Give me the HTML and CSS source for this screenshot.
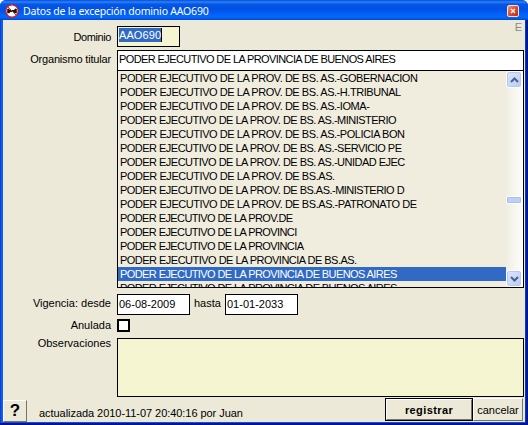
FILE: index.html
```html
<!DOCTYPE html>
<html lang="es">
<head>
<meta charset="utf-8">
<title>Datos de la excepción dominio AAO690</title>
<link rel="stylesheet" href="styles.css">
</head>
<body>
<main class="window">
  <header class="titlebar">
    <svg class="app-icon" viewBox="0 0 14 14"><circle cx="7" cy="7" r="6.2" fill="#fff" stroke="#d8121b" stroke-width="1.3"/><path d="M2.2 5l1.5-.5L5 6h4l1.3-1.5 1.5.5v4.2h-2L8.5 8h-3L4.2 9.2h-2z" fill="#171717"/><path d="M3 3l8 8" stroke="#e62832" stroke-width="1"/></svg>
    <h1 class="title">Datos de la excepción dominio AAO690</h1>
    <button class="close" aria-label="Cerrar"><svg viewBox="0 0 10 10"><path d="M3 3l4 4M7 3l-4 4" stroke="#fff" stroke-width="1.3"/></svg></button>
  </header>
  <section class="content">
    <div class="row row-domain">
      <label class="label">Dominio</label>
      <div class="field domain"><span class="selection">AAO690</span></div>
      <span class="mode">E</span>
    </div>
    <div class="row row-holder">
      <label class="label label-holder">Organismo titular</label>
      <div class="combo">
        <div class="field holder">PODER EJECUTIVO DE LA PROVINCIA DE BUENOS AIRES</div>
        <div class="dropdown">
          <ul class="options">
            <li>PODER EJECUTIVO DE LA PROV. DE BS. AS.-GOBERNACION</li>
            <li>PODER EJECUTIVO DE LA PROV. DE BS. AS.-H.TRIBUNAL</li>
            <li>PODER EJECUTIVO DE LA PROV. DE BS. AS.-IOMA-</li>
            <li class="snug">PODER EJECUTIVO DE LA PROV. DE BS. AS.-MINISTERIO</li>
            <li>PODER EJECUTIVO DE LA PROV. DE BS. AS.-POLICIA BON</li>
            <li class="snug">PODER EJECUTIVO DE LA PROV. DE BS. AS.-SERVICIO PE</li>
            <li class="snug">PODER EJECUTIVO DE LA PROV. DE BS. AS.-UNIDAD EJEC</li>
            <li>PODER EJECUTIVO DE LA PROV. DE BS.AS.</li>
            <li class="snug">PODER EJECUTIVO DE LA PROV. DE BS.AS.-MINISTERIO D</li>
            <li>PODER EJECUTIVO DE LA PROV. DE BS.AS.-PATRONATO DE</li>
            <li class="tight">PODER EJECUTIVO DE LA PROV.DE</li>
            <li class="tight">PODER EJECUTIVO DE LA PROVINCI</li>
            <li class="tight">PODER EJECUTIVO DE LA PROVINCIA</li>
            <li class="snug">PODER EJECUTIVO DE LA PROVINCIA DE BS.AS.</li>
            <li class="tight selected">PODER EJECUTIVO DE LA PROVINCIA DE BUENOS AIRES</li>
            <li class="tight">PODER EJECUTIVO DE LA PROVINCIA DE BUENOS AIRES</li>
          </ul>
          <div class="scrollbar">
            <div class="arrow"><svg viewBox="0 0 9 6"><path d="M1 5l3.5-3.5L8 5" fill="none" stroke="#4d6185" stroke-width="2"/></svg></div>
            <div class="thumb"></div>
            <div class="arrow arrow-down"><svg viewBox="0 0 9 6"><path d="M1 1l3.5 3.5L8 1" fill="none" stroke="#4d6185" stroke-width="2"/></svg></div>
          </div>
        </div>
      </div>
    </div>
    <div class="row row-dates">
      <label class="label label-dates">Vigencia: desde</label>
      <div class="field date">06-08-2009</div>
      <label class="until">hasta</label>
      <div class="field date">01-01-2033</div>
    </div>
    <div class="row row-void">
      <label class="label label-void">Anulada</label>
      <div class="checkbox"></div>
    </div>
    <div class="row row-notes">
      <label class="label label-notes">Observaciones</label>
      <div class="notes"></div>
    </div>
    <footer class="footer">
      <button class="help">?</button>
      <p class="status">actualizada 2010-11-07 20:40:16 por Juan</p>
      <div class="default-frame"><button class="submit">registrar</button></div>
      <button class="cancel">cancelar</button>
    </footer>
  </section>
</main>
</body>
</html>
```
FILE: styles.css
```css
* { box-sizing: border-box; }
html, body { margin: 0; width: 528px; height: 425px; overflow: hidden; background: #fff; }
body, button { font: 11px/14px "Liberation Sans", Arial, sans-serif; color: #000; }
h1, p, ul { margin: 0; padding: 0; }
button { padding: 0; border: 0; }

.window {
  width: 528px;
  height: 425px;
  display: flex;
  flex-direction: column;
  padding: 0 3px 3px;
  border-radius: 6px 6px 0 0;
  background: linear-gradient(90deg, #0831d9 0, #166aee 2px, #0855dd 3px, #0855dd 525px, #001ea0 526px, #00138c 528px);
  box-shadow: inset 0 -2px 0 #00138c;
}
.titlebar {
  height: 20px;
  margin: 0 -3px;
  padding: 2px 5px 0;
  display: flex;
  align-items: center;
  flex: none;
  border-radius: 6px 6px 0 0;
  background: linear-gradient(#0b4bd0 0, #2b82ff 2px, #0657e4 4px, #0050e4 9px, #0267ff 16px, #0363f5 18px, #0045c5 20px);
}
.app-icon { width: 14px; height: 14px; flex: none; }
.title {
  flex: 1;
  margin-left: 4px;
  font: 10.5px/16px "Noto Sans", sans-serif;
  letter-spacing: -.2px;
  color: #fff;
  white-space: nowrap;
}
.close {
  width: 12px;
  height: 12px;
  margin-right: 4px;
  border: 1px solid #f8dfdb;
  border-radius: 2px;
  background: linear-gradient(135deg, #f09a80, #df4b29 50%, #bd2d10);
  display: flex;
}
.close svg { width: 10px; height: 10px; }

.content {
  flex: 1;
  width: 522px;
  min-height: 0;
  display: flex;
  flex-direction: column;
  background: #ece9d8;
}
.row { display: flex; align-items: flex-start; }
.label {
  width: 108px;
  margin-right: 6px;
  padding-top: 2px;
  text-align: right;
  white-space: nowrap;
  flex: none;
}
.field { border: 1px solid #000; background: #fff; white-space: nowrap; }
.row-domain { height: 30px; padding-top: 6px; }
.row-domain .label { padding-top: 4px; letter-spacing: -.4px; }
.label-holder { letter-spacing: -.17px; }
.domain { width: 63px; height: 21px; padding: 1px; background: #f5f5d2; line-height: 14px; }
.selection { display: block; width: 43px; height: 14px; background: #316ac5; color: #fff; letter-spacing: .1px; border-right: 1px solid #000; }
.mode { margin: -6px 3px 0 auto; color: #8a8a83; }
.combo { width: 407px; }
.holder { height: 21px; padding: 1px; letter-spacing: -.6px; }
.dropdown {
  height: 218px;
  margin-top: -1px;
  border: 1px solid #000;
  display: flex;
  overflow: hidden;
  background: #f0eddf;
}
.options { width: 388px; list-style: none; flex: none; }
.options li { height: 14px; padding-left: 2px; white-space: nowrap; letter-spacing: -.45px; }
.options .snug { letter-spacing: -.52px; }
.options .tight { letter-spacing: -.59px; }
.options .selected { background: #316ac5; color: #fff; }
.scrollbar { width: 17px; display: flex; flex-direction: column; background: linear-gradient(90deg, #f0eee3, #fefefb); }
.arrow {
  width: 16px;
  height: 17px;
  flex: none;
  display: flex;
  align-items: center;
  justify-content: center;
  border: 1px solid #fff;
  border-radius: 3px;
  background: linear-gradient(135deg, #dce6ff, #b8cbf6);
  box-shadow: inset 0 0 0 1px #b7c9ef;
}
.arrow svg { width: 9px; height: 6px; }
.arrow-down { margin-top: auto; }
.thumb { width: 16px; height: 8px; margin-top: 108px; border: 1px solid #fff; border-radius: 2px; background: #bed0fa; box-shadow: inset 0 0 0 1px #aac0ee; }

.row-dates { margin-top: 6px; height: 25px; }
.label-dates { padding-top: 2px; }
.date { width: 73px; height: 21px; padding: 2px 1px; }
.until { width: 35px; padding: 2px 0 0 4px; }
.row-void { height: 19px; }
.label-void { padding-top: 0; margin-top: -1px; }
.checkbox { width: 13px; height: 13px; border: 2px solid #000; background: #fff; }
.row-notes { height: 59px; }
.label-notes { padding-top: 0; margin-top: -2px; }
.notes { width: 407px; height: 59px; border: 1px solid #000; background: #f5f5d2; }

.footer { display: flex; height: 25px; align-items: flex-start; }
.help {
  width: 24px;
  height: 22px;
  margin-top: 3px;
  border: 1px solid;
  border-color: #fff #77746c #77746c #fff;
  background: #ece9d8;
  font-weight: bold;
  font-size: 17px;
}
.status { margin: 9px 0 0 12px; width: 346px; white-space: nowrap; letter-spacing: -.05px; }
.default-frame { width: 88px; height: 23px; margin-top: 1px; border: 1px solid #000; }
.submit { display: block; width: 86px; height: 21px; background: #ece9d8; border: 1px solid; border-color: #fff #77746c #77746c #fff; font-weight: bold; letter-spacing: .4px; }
.cancel { width: 50px; height: 23px; margin-top: 1px; background: #ece9d8; border: 1px solid; border-color: #fff #77746c #77746c #fff; }
```
